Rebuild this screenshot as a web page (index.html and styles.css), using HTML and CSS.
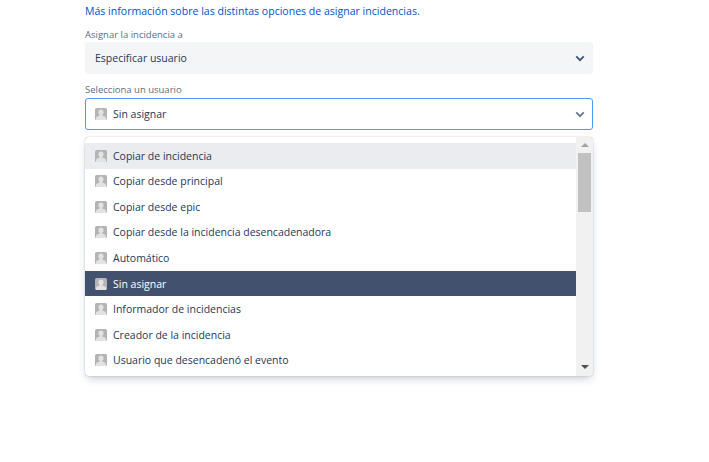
FILE: index.html
```html
<!DOCTYPE html>
<html lang="es">
<head>
<meta charset="utf-8">
<title>Asignar incidencia</title>
<link rel="stylesheet" href="styles.css">
</head>
<body>
<svg class="defs" width="0" height="0" aria-hidden="true">
  <symbol id="avatar" viewBox="0 0 12 12">
    <rect width="12" height="12" rx="1.500" fill="#b4b4b4"/>
    <path d="M6 1.500c1.700 0 2.600 1.200 2.600 2.700 0 1.100-.5 2-1.200 2.600v.8l2.400 1c.8.4 1.200.8 1.200 1.500V12H1v-1.900c0-.7.4-1.100 1.200-1.500l2.400-1v-.8C3.900 6.200 3.400 5.300 3.400 4.200c0-1.500.9-2.700 2.600-2.700z" fill="#e2e2e2"/>
  </symbol>
</svg>
<main class="form">
  <a class="info" href="#">Más información sobre las distintas opciones de asignar incidencias.</a>
  <div class="field first">
    <label class="label">Asignar la incidencia a</label>
    <div class="select filled">
      <span class="value">Especificar usuario</span>
      <svg class="chev" viewBox="0 0 12 8"><path d="M1.500 1.500 6 6l4.500-4.500" fill="none" stroke="#42526e" stroke-width="2.200"/></svg>
    </div>
  </div>
  <div class="field second">
    <label class="label">Selecciona un usuario</label>
    <div class="select focus">
      <svg class="avatar"><use href="#avatar"/></svg>
      <span class="value">Sin asignar</span>
      <svg class="chev" viewBox="0 0 12 8"><path d="M1.500 1.500 6 6l4.500-4.500" fill="none" stroke="#6b778c" stroke-width="2.200"/></svg>
    </div>
    <div class="menu">
      <ul class="list">
        <li class="item hover"><svg class="avatar"><use href="#avatar"/></svg>Copiar de incidencia</li>
        <li class="item"><svg class="avatar"><use href="#avatar"/></svg>Copiar desde principal</li>
        <li class="item"><svg class="avatar"><use href="#avatar"/></svg>Copiar desde epic</li>
        <li class="item"><svg class="avatar"><use href="#avatar"/></svg>Copiar desde la incidencia desencadenadora</li>
        <li class="item"><svg class="avatar"><use href="#avatar"/></svg>Automático</li>
        <li class="item selected"><svg class="avatar"><use href="#avatar"/></svg>Sin asignar</li>
        <li class="item"><svg class="avatar"><use href="#avatar"/></svg>Informador de incidencias</li>
        <li class="item"><svg class="avatar"><use href="#avatar"/></svg>Creador de la incidencia</li>
        <li class="item"><svg class="avatar"><use href="#avatar"/></svg>Usuario que desencadenó el evento</li>
      </ul>
      <div class="scrollbar">
        <span class="arrow up"></span>
        <span class="thumb"></span>
        <span class="arrow down"></span>
      </div>
    </div>
  </div>
</main>
</body>
</html>
```
FILE: styles.css
```css
* { box-sizing: border-box; }
html, body { margin: 0; height: 100%; background: #fff; overflow: hidden; }
body { font-family: "Open Sans", Roboto, sans-serif; font-size: 10.5px; color: #253858; }
.defs { position: absolute; }
.form { width: 508px; margin-left: 85px; padding-top: 3px; }
.info { display: block; height: 16px; line-height: 16px; font-size: 10.55px; color: #0052cc; text-decoration: none; white-space: nowrap; }
.field { position: relative; display: flex; flex-direction: column; margin-top: 8px; }
.label { height: 14px; line-height: 16px; font-size: 9.5px; color: #5e6c84; margin-bottom: 1px; }
.second .label { margin-bottom: 2px; }
.select { height: 32px; display: flex; align-items: center; border-radius: 3px; padding: 0 8px 0 10px; }
.filled { background: #f4f5f7; }
.focus { border: 1px solid #4c9aff; padding: 0 7px 0 9px; }
.value { flex: 1; }
.chev { width: 10px; height: 7px; }
.avatar { width: 12px; height: 12px; margin-right: 6px; flex: none; }
.menu { position: absolute; left: 0; top: 55px; width: 508px; height: 239px; display: flex; background: #fff; border-radius: 4px; box-shadow: 0 0 1px rgba(9,30,66,.5), 0 4px 8px -2px rgba(9,30,66,.25); overflow: hidden; }
.list { flex: 1; margin: 0; padding: 6px 0 0; list-style: none; }
.item { height: 25.55px; display: flex; align-items: center; padding-left: 10px; white-space: nowrap; }
.hover { background: #ebecf0; }
.selected { background: #42526e; color: #fff; }
.scrollbar { width: 17px; background: #f1f1f1; display: flex; flex-direction: column; align-items: center; }
.thumb { width: 13px; height: 59px; background: #c1c1c1; margin-top: 6px; }
.arrow { width: 0; height: 0; border-left: 4px solid transparent; border-right: 4px solid transparent; }
.up { border-bottom: 4px solid #a3a3a3; margin-top: 6px; }
.down { border-top: 4px solid #505050; margin-top: auto; margin-bottom: 7px; }
```
